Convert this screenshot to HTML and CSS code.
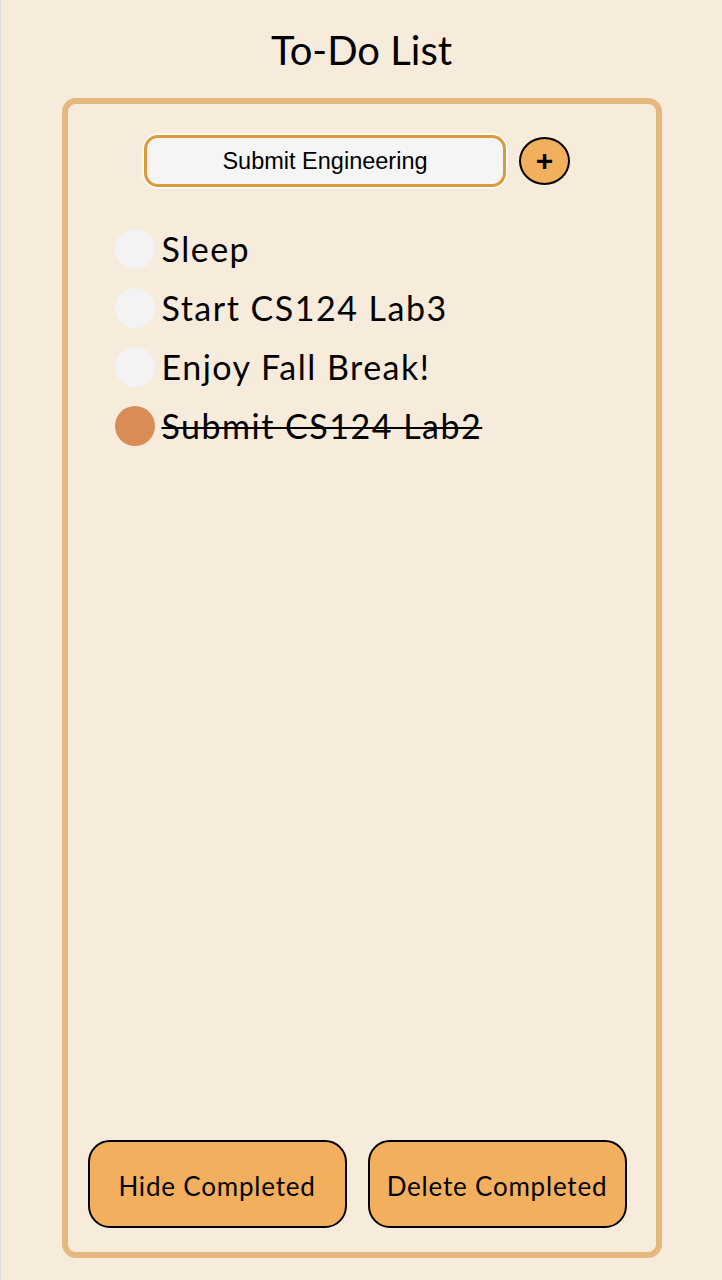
FILE: index.html
```html
<!DOCTYPE html>
<html>
<head>
<meta charset="utf-8">
<link rel="stylesheet" href="styles.css">
</head>
<body>
<div class="page">
  <h1 class="title">To-Do List</h1>
  <div class="card">
    <div class="add-row">
      <input class="task-input" type="text" value="Submit Engineering">
      <button class="add-btn">+</button>
    </div>
    <ul class="list">
      <li class="item"><span class="dot"></span><span class="label">Sleep</span></li>
      <li class="item"><span class="dot"></span><span class="label">Start CS124 Lab3</span></li>
      <li class="item"><span class="dot"></span><span class="label">Enjoy Fall Break!</span></li>
      <li class="item done"><span class="dot"></span><span class="label">Submit CS124 Lab2</span></li>
    </ul>
    <div class="actions">
      <button class="action">Hide Completed</button>
      <button class="action">Delete Completed</button>
    </div>
  </div>
</div>
</body>
</html>
```
FILE: styles.css
```css
html, body {
  margin: 0;
  padding: 0;
  background: #f7ecdb;
}
body {
  border-left: 1px solid #dcdcdc;
  min-height: 1280px;
  box-sizing: border-box;
  font-family: "Lato", "Noto Sans", sans-serif;
}
.page {
  display: flex;
  flex-direction: column;
  align-items: center;
  padding-top: 26px;
}
.title {
  margin: 0;
  font-size: 40px;
  font-weight: 400;
  line-height: 48px;
  color: #000;
}
.card {
  margin-top: 24px;
  width: 600px;
  height: 1160px;
  box-sizing: border-box;
  border: 6px solid #e4b87f;
  border-radius: 14px;
  padding-right: 9px;
  display: flex;
  flex-direction: column;
}
.add-row {
  display: flex;
  align-items: center;
  justify-content: center;
  gap: 13px;
  margin-top: 31px;
}
.task-input {
  width: 362px;
  height: 52px;
  box-sizing: border-box;
  border: 3px solid #dc9b3a;
  box-shadow: 0 0 0 1.5px #ffffff;
  border-radius: 14px;
  background: #f5f5f5;
  text-align: center;
  font-family: "Liberation Sans", Arial, sans-serif;
  font-size: 23.5px;
  color: #000;
  outline: none;
  padding: 0;
}
.add-btn {
  width: 51px;
  height: 48px;
  border-radius: 50%;
  border: 2px solid #000;
  background: #f2b05e;
  font-size: 30px;
  font-weight: 700;
  line-height: 1;
  padding: 0;
  font-family: "Liberation Sans", Arial, sans-serif;
  color: #000;
}
.list {
  list-style: none;
  margin: 41px 0 0 0;
  padding: 0 0 0 47px;
  display: flex;
  flex-direction: column;
  gap: 18px;
}
.item {
  display: flex;
  align-items: center;
  gap: 7px;
  height: 41px;
}
.dot {
  width: 40px;
  height: 40px;
  border-radius: 50%;
  background: #f3f3f3;
  flex: none;
}
.label {
  font-size: 34px;
  font-weight: 400;
  letter-spacing: 1.5px;
  color: #000;
  line-height: 40px;
}
.done .dot {
  background: #d98d56;
}
.done .label {
  text-decoration: line-through;
  text-decoration-thickness: 2px;
}
.actions {
  margin-top: auto;
  margin-bottom: 24px;
  display: flex;
  justify-content: center;
  gap: 21px;
}
.action {
  width: 259px;
  height: 88px;
  box-sizing: border-box;
  border: 2px solid #000;
  border-radius: 22px;
  background: #f2b05e;
  font-family: "Lato", "Noto Sans", sans-serif;
  font-size: 26px;
  font-weight: 400;
  letter-spacing: 0.8px;
  padding-top: 5px;
  color: #000;
}
```
